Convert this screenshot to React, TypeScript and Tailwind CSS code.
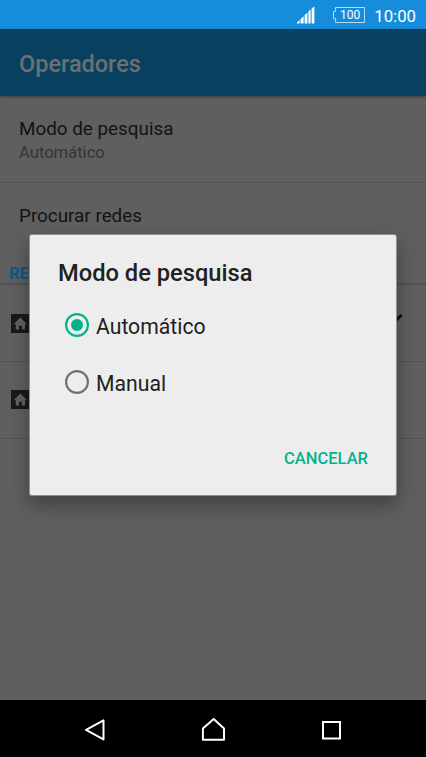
import type { ReactNode } from 'react';

const options = [
    { label: 'Automático', checked: true },
    { label: 'Manual', checked: false },
];

function StatusBar() {
    return (
        <div className="h-[29px] shrink-0 bg-[#168dda] flex items-center justify-end pr-[10px] text-white">
            <svg className="mt-[1px] w-[18px] h-[18px]" viewBox="0 0 18 18" fill="#fff">
                <path d="M0 17.5V16.5L2.6 14V17.5ZM3.6 17.5V13L6.6 10.2V17.5ZM7.6 17.5V9.3L10.4 6.5V17.5ZM11.4 17.5V5.5L13.6 3.5V17.5ZM14.6 17.5V2.6L17.4 0.4V17.5Z" />
            </svg>
            <div className="relative ml-[17px] w-[34px] h-[18px] flex items-center justify-center">
                <svg className="absolute inset-0" width="34" height="18" viewBox="0 0 34 18" fill="none" stroke="#b4dbf5" strokeWidth="1">
                    <path d="M3.5 1.5H32.5V16.5H3.5V12.5H1.5V5.5H3.5Z" />
                </svg>
                <span className="relative ml-[2px] mt-[1px] text-[12px] leading-none">100</span>
            </div>
            <span className="ml-[8px] mt-[3px] text-[16.8px] leading-none">10:00</span>
        </div>
    );
}

function Row({ className, children }: { className: string; children?: ReactNode }) {
    return <div className={`border-b border-[#535353] ${className}`}>{children}</div>;
}

function HomeBadge() {
    return (
        <svg className="w-[19px] h-[19px]" viewBox="0 0 19 19">
            <path d="M0 0H19V19H0Z" fill="#191919" />
            <path d="M9.4 3.6L16 10.2H14V15.6H10.8V11.8H8V15.6H4.8V10.2H2.6Z" fill="#616161" />
        </svg>
    );
}

function Radio({ checked }: { checked: boolean }) {
    return (
        <svg className="w-[24px] h-[24px]" viewBox="0 0 24 24" fill="none">
            <circle cx="12" cy="12" r="10.9" stroke={checked ? '#06b28e' : '#707070'} strokeWidth="2.2" />
            {checked && <circle cx="12" cy="12" r="6" fill="#06b28e" />}
        </svg>
    );
}

function Dialog() {
    return (
        <div className="absolute left-[30px] top-[235px] w-[366px] h-[260px] rounded-[2px] bg-[#ededed] text-[#212121] shadow-[0_0_0_1px_#909090,0_9px_18px_2px_rgba(0,0,0,0.3)]">
            <h2 className="pl-[28px] pt-[22px] text-[23.7px] leading-[32px] font-medium">Modo de pesquisa</h2>
            <div className="pt-[7px]">
                {options.map((o) => (
                    <div key={o.label} className="h-[57px] pl-[35px] flex items-center gap-[7px]">
                        <Radio checked={o.checked} />
                        <span className="mt-[5px] text-[21.2px] leading-none">{o.label}</span>
                    </div>
                ))}
            </div>
            <div className="mt-[37px] pr-[28px] text-right text-[16.5px] leading-[24px] font-medium text-[#06b28e]">CANCELAR</div>
        </div>
    );
}

function NavBar() {
    return (
        <div className="h-[57px] shrink-0 bg-black flex items-center pt-[3px]">
            <svg className="ml-[83px] w-[24px] h-[24px]" viewBox="0 0 24 24" fill="none" stroke="#fff" strokeWidth="2" strokeLinejoin="round">
                <path d="M20.5 2.4V21.4L3 11.9Z" />
            </svg>
            <svg className="ml-[94px] w-[24px] h-[24px]" viewBox="0 0 24 24" fill="none" stroke="#fff" strokeWidth="2" strokeLinejoin="round">
                <path d="M1.9 21.8V10.5L12.7 1L23 10.5V21.8Z" />
            </svg>
            <svg className="ml-[95px] w-[24px] h-[24px]" viewBox="0 0 24 24" fill="none" stroke="#fff" strokeWidth="2">
                <path d="M3 4H20V20.5H3Z" />
            </svg>
        </div>
    );
}

export default function App() {
    return (
        <div className="relative w-[426px] h-[757px] overflow-hidden flex flex-col bg-[#5f5f5f] font-[Roboto,sans-serif]">
            <StatusBar />
            <div className="relative h-[67px] shrink-0 pl-[19px] pt-[4px] flex items-center bg-[#09405f] shadow-[0_1px_3px_rgba(0,0,0,0.35)]">
                <h1 className="text-[23.5px] leading-none font-medium text-[#6b7073]">Operadores</h1>
            </div>

            <div className="flex-1 min-h-0">
                <Row className="h-[87px] pl-[19px] pt-[21px]">
                    <div className="text-[18.85px] leading-[24px] text-[#131313]">Modo de pesquisa</div>
                    <div className="text-[16.6px] leading-[24px] text-[#353535]">Automático</div>
                </Row>
                <div className="h-[76px] pl-[19px] pt-[21px] text-[18.85px] leading-[24px] text-[#131313]">Procurar redes</div>
                <div className="h-[26px] pl-[9px] pt-[4px] border-b-2 border-[#515151] text-[16.5px] leading-[22px] font-bold text-[#0d5984]">REDES</div>
                {/* Available networks */}
                <Row className="h-[77px] pl-[11px] pr-[23px] flex items-center justify-between">
                    <HomeBadge />
                    <svg className="-mt-[3px] w-[22px] h-[18px]" viewBox="0 0 22 18" fill="none" stroke="#0d0d0d" strokeWidth="3">
                        <path d="M3 9L8 14L20.5 2" />
                    </svg>
                </Row>
                <Row className="h-[77px] pl-[11px] pb-[1px] flex items-center">
                    <HomeBadge />
                </Row>
            </div>

            <NavBar />
            <Dialog />
        </div>
    );
}
